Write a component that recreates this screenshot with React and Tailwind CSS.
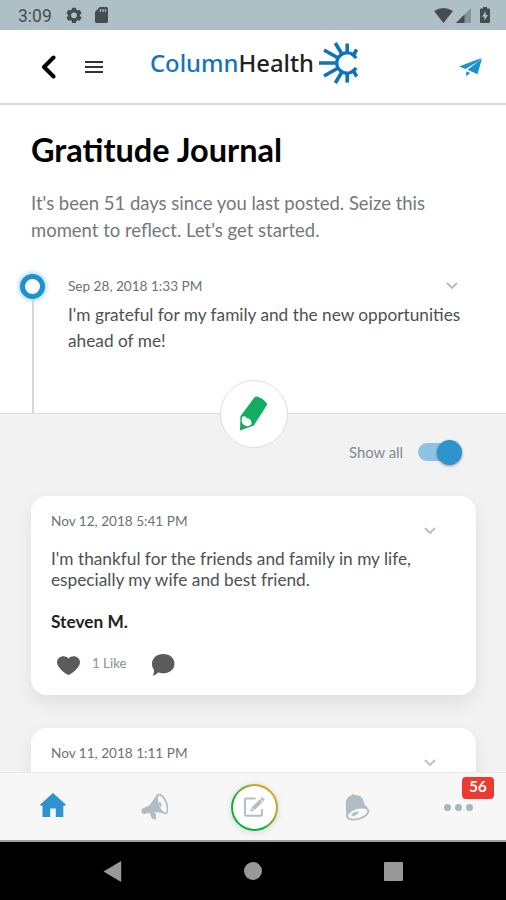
const posts = [
    {
        date: "Nov 12, 2018 5:41 PM",
        lines: [
            "I'm thankful for the friends and family in my life,",
            "especially my wife and best friend.",
        ],
        author: "Steven M.",
        likes: "1 Like",
    },
    { date: "Nov 11, 2018 1:11 PM", lines: [] },
];

function StatusBar() {
    return (
        <div className="h-[30px] shrink-0 bg-[#afbfc6] flex items-center justify-between pl-[18px] pr-4 text-[#454d50]">
            <div className="flex items-center">
                <span className="w-[34px] pt-[2px] text-[17.5px] leading-[18px] font-['Roboto',sans-serif] whitespace-nowrap">3:09</span>
                <svg className="ml-[14px]" width="16" height="16" viewBox="0 0 24 24" fill="currentColor">
                    <path fillRule="evenodd" d="M9 1h6l.6 3.3 1.7 1 3.2-1.1 3 5.2-2.6 2.1v2l2.6 2.1-3 5.2-3.2-1.1-1.7 1L15 24H9l-.6-3.3-1.7-1-3.2 1.1-3-5.2 2.6-2.1v-2L.5 9.4l3-5.2 3.2 1.1 1.7-1L9 1Zm3 7.2a4.3 4.3 0 1 0 0 8.6 4.3 4.3 0 0 0 0-8.6Z" />
                </svg>
                <svg className="ml-[13px]" width="13" height="16" viewBox="0 0 13 16" fill="currentColor">
                    <path fillRule="evenodd" d="M4.7 0H11.5Q13 0 13 1.5V14.5Q13 16 11.5 16H1.5Q0 16 0 14.5V5ZM4.8 2.2V4.8H6.2V2.2ZM7.3 2.2V4.8H8.7V2.2ZM9.8 2.2V4.8H11.2V2.2Z" />
                </svg>
            </div>
            <div className="flex items-center">
                <svg width="19" height="15" viewBox="0 0 19 15" fill="currentColor">
                    <path d="M0 3Q9.5-2.8 19 3L9.5 15Z" />
                </svg>
                <svg className="ml-[3px]" width="15" height="15" viewBox="0 0 15 15">
                    <path d="M15 0V15H0Z" fill="#84929a" />
                    <path d="M8.5 6.5V15H0Z" fill="#454d50" />
                </svg>
                <svg className="ml-[9px]" width="10" height="16" viewBox="0 0 10 16" fill="currentColor">
                    <path fillRule="evenodd" d="M3 0H7V1.6H9Q10 1.6 10 2.6V15Q10 16 9 16H1Q0 16 0 15V2.6Q0 1.6 1 1.6H3ZM5.7 4 2 9.7H4.4V13.7L8 8H5.7Z" />
                </svg>
            </div>
        </div>
    );
}

function Logo() {
    return (
        <div className="flex items-center">
            <div className="w-[166px] text-[23.8px] leading-[30px] font-medium font-['Noto_Sans','Open_Sans',sans-serif] whitespace-nowrap">
                <span className="text-[#1573bd]">Column</span>
                <span className="text-[#222]">Health</span>
            </div>
            <svg className="ml-[2px]" width="42" height="44" viewBox="0 0 42 44" fill="none" stroke="#1272b9" strokeWidth="3.6">
                <path d="M38 17.2A10.2 10.2 0 1 0 38 26.8" strokeWidth="3.3" />
                <path d="M1 22H19M6 9 21 17.5M17.3 2 24.5 14M29.2 2.5V13M38.7 8.5 34.5 15.5M6 35 21 26.5M17.3 42 24.5 30M29.2 41.5V31M38.7 35.5 34.5 28.5" />
            </svg>
        </div>
    );
}

function Header() {
    return (
        <div className="h-[75px] shrink-0 bg-white border-b-2 border-[#d9d9d9] flex items-center pl-[41px] pr-[24px]">
            <svg width="15" height="24" viewBox="0 0 15 24" fill="none" stroke="#000" strokeWidth="4" strokeLinecap="round" strokeLinejoin="round">
                <path d="M12.5 2.5 3 12 12.5 21.5" />
            </svg>
            <div className="ml-[29px] flex flex-col gap-[3px] w-[18px]">
                <span className="h-[2px] bg-[#333]" />
                <span className="h-[2px] bg-[#333]" />
                <span className="h-[2px] bg-[#333]" />
            </div>
            <div className="ml-[47px] -mt-[7px]">
                <Logo />
            </div>
            <svg className="ml-auto mt-px" width="23" height="19" viewBox="0 0 23 19" fill="#1b8fd0">
                <path d="M22.5 0 0 8.6 6.6 11 18.5 3.8ZM23 .5 8.6 11.8 18.5 16.2ZM7.2 13.2V18.2L11.2 15Z" />
            </svg>
        </div>
    );
}

function Chevron({ className }) {
    return (
        <svg className={className} width="12" height="8" viewBox="0 0 12 8" fill="none" stroke="#b3bcbd" strokeWidth="1.8">
            <path d="M1 1 6 6 11 1" />
        </svg>
    );
}

function Intro() {
    return (
        <div className="px-[31px] pt-[25px] h-[162px]">
            <h1 className="text-[32.5px] leading-[40px] font-bold text-black whitespace-nowrap">Gratitude Journal</h1>
            <p className="mt-[20px] text-[18.48px] leading-[27px] text-[#74787b] whitespace-nowrap">
                <span className="block">It's been 51 days since you last posted. Seize this</span>
                <span className="block">moment to reflect. Let's get started.</span>
            </p>
        </div>
    );
}

function Timeline() {
    return (
        <div className="h-[146px] flex pl-[20px]">
            <div className="w-[25px] flex flex-col items-center pt-[7px]">
                <div className="size-[25px] shrink-0 rounded-full border-[5px] border-[#2091cc] bg-white shadow-[0_0_5px_1px_#8fd3f5]" />
                <div className="w-[2px] flex-1 bg-[#d8d8d8]" />
            </div>
            <div className="ml-[23px] pt-[8px] flex-1">
                <div className="h-[23px] flex justify-between pr-[48px]">
                    <span className="text-[13.6px] leading-[22px] text-[#6b7276] whitespace-nowrap">Sep 28, 2018 1:33 PM</span>
                    <Chevron className="mt-[7px]" />
                </div>
                <p className="mt-[4px] text-[17.25px] leading-[26px] text-[#4d5153] whitespace-nowrap">
                    <span className="block">I'm grateful for my family and the new opportunities</span>
                    <span className="block">ahead of me!</span>
                </p>
            </div>
        </div>
    );
}

function WriteButton() {
    return (
        <div className="absolute left-[220px] -top-[34px] size-[68px] rounded-full bg-white border border-[#dedede] flex items-center justify-center">
            <svg className="-mt-px -ml-px" width="29" height="35" viewBox="0 0 29 35">
                <path d="M15.4 1.6Q16.4.2 18.3.8 23 1.7 26.4 5.8 28.8 7.5 27.6 9.6L14.8 29.6 1 34.5 1.4 20.3Z" fill="#12ae60" />
                <path d="M3.2 20.8C5.2 19.8 7 20.2 8 22.4 10.2 22 12.7 24.3 12.6 28.2L8.8 30.2C5.3 29.7 3.2 28.2 2.6 24.9Z" fill="#fff" />
            </svg>
        </div>
    );
}

function ShowAll() {
    return (
        <div className="flex items-start justify-end pr-[44px] pt-[25px] h-[82px]">
            <span className="mr-[15px] text-[14.8px] leading-[26px] text-[#7e8a91] whitespace-nowrap">Show all</span>
            <div className="mt-[4px] w-[44px] h-[18px] rounded-full bg-[#8fc3e6] flex items-center justify-end">
                <div className="size-[25px] rounded-full bg-[#2d94ce] shadow-[0_1px_3px_rgba(0,0,0,0.4)]" />
            </div>
        </div>
    );
}

function PostCard({ post }) {
    return (
        <div className="h-[199px] mb-[33px] shrink-0 rounded-[16px] bg-white shadow-[0_8px_18px_rgba(0,0,0,0.08)] pl-[20px] pr-[40px] pt-[15px]">
            <div className="h-[37px] flex justify-between">
                <span className="text-[13.6px] leading-[21px] text-[#6b7276] whitespace-nowrap">{post.date}</span>
                <Chevron className="mt-[16px]" />
            </div>
            <p className="text-[17.25px] leading-[21px] text-[#4d5153] whitespace-nowrap">
                {post.lines.map((line) => (
                    <span key={line} className="block">{line}</span>
                ))}
            </p>
            {post.author && (
                <div className="mt-[21px] text-[17.25px] leading-[22px] font-bold text-[#222]">{post.author}</div>
            )}
            {post.likes && (
                <div className="mt-[18px] ml-[6px] flex items-center">
                    <svg className="mt-[3px]" width="23" height="19" viewBox="0 0 23 20" preserveAspectRatio="none" fill="#5b5b5b">
                        <path d="M11.5 20C9.2 19.2 0 12.4 0 6.5 0 .5 7.7-2 11.5 2.6 15.3-2 23 .5 23 6.5 23 12.4 13.8 19.2 11.5 20Z" />
                    </svg>
                    <span className="ml-[12px] -mt-px w-[36px] text-[13.3px] leading-[20px] text-[#8b9194] whitespace-nowrap">{post.likes}</span>
                    <svg className="ml-[23px] mt-[3px]" width="24" height="22" viewBox="0 0 24 22" fill="#5b5b5b">
                        <path d="M12.3 0C18.8 0 23.5 4.2 23.5 9.7 23.5 15.1 18.8 19.3 12.3 19.3 10.5 19.3 8.7 19 7.2 18.2 5.8 20 4 21.4 1.8 21.8 2.7 20.2 3.1 18 3 15.8 1.6 14.1 1 12 1 9.7 1 4.2 5.8 0 12.3 0Z" />
                    </svg>
                </div>
            )}
        </div>
    );
}

function TabBar() {
    return (
        <div className="h-[70px] shrink-0 bg-[#f7f7f7] border-t border-[#e8e8e8] border-b-2 border-b-[#a0a0a0] flex relative">
            <div className="w-[106px] flex items-center justify-center pb-[3px]">
                <svg width="26" height="24" viewBox="0 0 26 24" fill="#2d94ce">
                    <path d="M13 0 26 11.7 25 12.8H23.3V24H15.8V15.5H10.2V24H2.5V12.8H1L0 11.7Z" />
                </svg>
            </div>
            <div className="w-[98px] flex items-center justify-center pr-px">
                <svg width="27" height="28" viewBox="0 0 27 28" fill="#b0bdc5">
                    <path d="M16.5 1 8.5 12.2 1.7 15.5Q-.2 17 .7 19.3 1.8 21.5 4.3 20.7L8.5 19.8 11 25.6 14.5 26.8 15.6 24.6 14.6 23.2 15.2 21.6 13.5 19.1 25.6 20.5Z" />
                    <ellipse cx="21.3" cy="11" rx="4.2" ry="10" fill="#f7f7f7" stroke="#b0bdc5" strokeWidth="1.8" transform="rotate(-21 21.3 11)" />
                    <path d="M17.5 9.3Q20 8.5 20.5 11 21 13.4 19.3 14Z" />
                </svg>
            </div>
            <div className="w-[100px] flex items-center justify-center pt-px">
                <div className="size-[47px] rounded-full bg-linear-to-tr from-[#0cae38] from-40% to-[#d8a61d] to-85% p-[2px] shadow-[0_1px_7px_rgba(0,0,0,0.15)]">
                    <div className="size-full rounded-full bg-white flex items-center justify-center">
                        <svg width="22" height="22" viewBox="0 0 22 22" fill="none" stroke="#b5bec4" strokeWidth="2">
                            <path d="M12.5 2.5H3Q2 2.5 2 3.5V18.8Q2 19.8 3 19.8H18Q19 19.8 19 18.8V13" />
                            <path d="M10 12.8 18.2 4.6" strokeWidth="3.9" />
                            <path d="M18.7 4.1 20.4 2.4" strokeWidth="3.9" />
                            <path d="M7.2 15.6 8 12 10.8 14.8Z" fill="#b5bec4" stroke="none" />
                        </svg>
                    </div>
                </div>
            </div>
            <div className="w-[106px] flex items-center justify-center">
                <svg width="25" height="28" viewBox="0 0 25 28" fill="#b0bdc5">
                    <path d="M6.5 2.3 7.8.7 9.3 2C14.3 2 17.7 4 18.5 8 19.1 11 20 12.8 23 14.7L1 24C2 20 .8 18 .8 13 .5 7 2.2 3.6 6.5 2.3Z" />
                    <ellipse cx="12.7" cy="20.6" rx="11" ry="5.4" fill="#f7f7f7" stroke="#b0bdc5" strokeWidth="1.8" transform="rotate(-17 12.7 20.6)" />
                    <path d="M6 22Q9 18 14 18.5 13 21.5 9 23.3Z" />
                </svg>
            </div>
            <div className="flex-1 flex items-center justify-center gap-[4px] pt-[2px]">
                <span className="size-[7px] rounded-full bg-[#abb6bb]" />
                <span className="size-[7px] rounded-full bg-[#abb6bb]" />
                <span className="size-[7px] rounded-full bg-[#abb6bb]" />
            </div>
            <div className="absolute left-[462px] top-[4px] w-[32px] h-[22px] rounded-[4px] bg-[#eb3a31] text-white text-[15px] leading-[19px] font-bold text-center">56</div>
        </div>
    );
}

function SystemNav() {
    return (
        <div className="h-[58px] shrink-0 bg-black flex items-center pl-[103px]">
            <svg width="19" height="21" viewBox="0 0 19 21" fill="#999">
                <path d="M18.2 0V21L.5 10.5Z" />
            </svg>
            <div className="ml-[122px] size-[18px] rounded-full bg-[#999]" />
            <div className="ml-[122px] size-[19px] rounded-[1px] bg-[#999]" />
        </div>
    );
}

export default function App() {
    return (
        <div className="w-[506px] h-[900px] overflow-hidden flex flex-col bg-white font-['Lato',sans-serif]">
            <StatusBar />
            <Header />
            <div className="h-[667px] shrink-0 overflow-hidden flex flex-col">
                <div className="shrink-0 h-[308px]">
                    <Intro />
                    <Timeline />
                </div>
                <div className="relative flex-1 bg-[#f2f2f2] border-t border-[#dedede]">
                    <WriteButton />
                    <ShowAll />
                    <div className="pl-[31px] pr-[30px]">
                        {posts.map((post) => (
                            <PostCard key={post.date} post={post} />
                        ))}
                    </div>
                </div>
            </div>
            <TabBar />
            <SystemNav />
        </div>
    );
}
